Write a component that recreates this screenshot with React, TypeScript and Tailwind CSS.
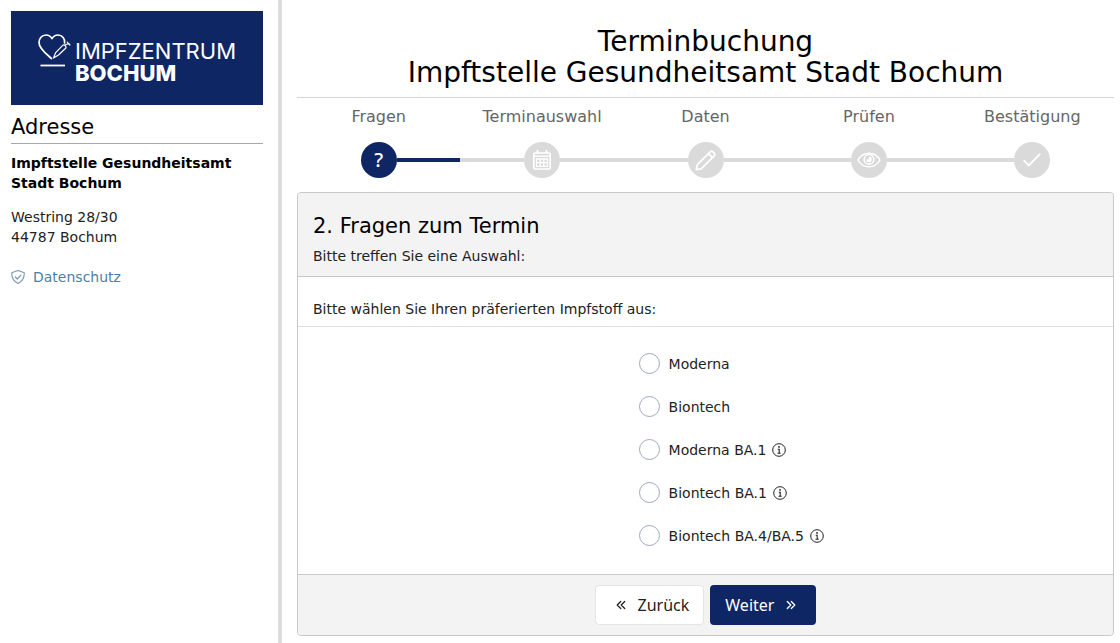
import { useState } from "react";
import type { ReactNode } from "react";
import { clsx } from "clsx";

interface Step {
  label: string;
  icon: ReactNode;
}

interface Vaccine {
  id: string;
  name: string;
  hasInfo?: boolean;
}

function CalendarIcon() {
  return (
    <svg viewBox="0 0 20 22" className="h-[22px] w-5" fill="none" stroke="currentColor" aria-hidden="true">
      <rect x="1.8" y="4" width="16.4" height="16" rx="1.5" strokeWidth="1.7" />
      <path d="M1.5 7.2h17" strokeWidth="1.4" />
      <path d="M5.5 1v3M14.5 1v3" strokeWidth="1.8" />
      <path d="M4.5 10h11v7.4h-11zM4.5 13.7h11M8.2 10v7.4M11.8 10v7.4" strokeWidth="1.3" />
    </svg>
  );
}

function PencilIcon() {
  return (
    <svg viewBox="0 0 22 22" className="size-[21px]" fill="none" stroke="currentColor" strokeWidth="1.8" strokeLinejoin="round" aria-hidden="true">
      <path d="M1.3 20.7l1.2-5.4L15.9 1.9a2 2 0 0 1 2.8 0l1.4 1.4a2 2 0 0 1 0 2.8L6.7 19.5z" />
      <path d="M14 3.8l4.2 4.2" />
    </svg>
  );
}

function EyeIcon() {
  return (
    <svg viewBox="0 0 24 16" className="h-4 w-6" fill="none" stroke="currentColor" strokeWidth="1.5" aria-hidden="true">
      <path d="M1 8C3.3 3.8 7.3 1.2 12 1.2S20.7 3.8 23 8c-2.3 4.2-6.3 6.8-11 6.8S3.3 12.2 1 8z" />
      <circle cx="12" cy="7.4" r="4.8" />
      <path d="M12 4.6A2.8 2.8 0 1 1 9.2 7.4h1.6A1.2 1.2 0 0 0 12 6.2z" fill="currentColor" stroke="none" />
    </svg>
  );
}

function CheckIcon() {
  return (
    <svg viewBox="0 0 18 14" className="h-[14px] w-[18px]" fill="none" stroke="currentColor" strokeWidth="1.8" strokeLinecap="round" aria-hidden="true">
      <path d="M1.2 7.8l4.6 4.7L16.8 1.2" />
    </svg>
  );
}

function InfoIcon() {
  return (
    <svg viewBox="0 0 14 14" className="size-[14px]" fill="none" stroke="currentColor" aria-hidden="true">
      <circle cx="7" cy="7" r="6.3" />
      <path d="M5.7 6.2h1.5v4M5.5 10.3h3.2" strokeWidth="1.1" />
      <circle cx="7" cy="3.9" r=".9" fill="currentColor" stroke="none" />
    </svg>
  );
}

function ShieldIcon() {
  return (
    <svg viewBox="0 0 14 14" className="size-[14px] text-[#7796b4]" fill="none" stroke="currentColor" strokeLinejoin="round" aria-hidden="true">
      <path d="M7 .6l6.3 2.1c.1 4.7-1.8 8.7-6.3 10.7C2.5 11.4.6 7.4.7 2.7z" strokeWidth="1.1" />
      <path d="M4.3 7l2 2L10 5.2" strokeWidth="1.2" strokeLinecap="round" />
    </svg>
  );
}

function Chevrons({ flip = false }: { flip?: boolean }) {
  return (
    <svg
      viewBox="0 0 10 10"
      className={clsx("size-[10px]", flip && "rotate-180")}
      fill="none"
      stroke="currentColor"
      strokeWidth="1.3"
      strokeLinecap="round"
      strokeLinejoin="round"
      aria-hidden="true"
    >
      <path d="M1.3 1.5L4.8 5l-3.5 3.5M5.3 1.5L8.8 5l-3.5 3.5" />
    </svg>
  );
}

function Logo() {
  return (
    <div className="flex h-[94px] items-center justify-center gap-[3px] bg-[#0e2663] pt-[7px] text-white">
      <svg viewBox="0 0 34 34" className="-mt-6 size-[34px] shrink-0" fill="none" stroke="currentColor" strokeLinecap="round" strokeLinejoin="round" aria-hidden="true">
        <path d="M13.5 25.5C9 21.500 1 16 1 9.500 1 5.500 3.800 2 8 2c2.800 0 4.700 1.500 6 3.600C15.300 3.500 17.200 2 20 2c4.300 0 7.300 3.800 6.600 8" strokeWidth="1.7" />
        <path d="M15.5 25l2.2-5.4 7-7.2c1.5-1.3 4.4 1.1 3 2.9l-7.2 6.7zM27 12l4-1.5M29.2 9.2l2.7 2.8" strokeWidth="1.2" />
        <path d="M2.5 32.5H27" strokeWidth="1.8" strokeLinecap="butt" />
      </svg>
      <div className="font-[Inter,sans-serif] text-[22px] leading-[22px]">
        <div>IMPFZENTRUM</div>
        <div className="font-extrabold">BOCHUM</div>
      </div>
    </div>
  );
}

const steps: Step[] = [
  { label: "Fragen", icon: <span className="font-['Noto_Sans',sans-serif] text-xl font-medium">?</span> },
  { label: "Terminauswahl", icon: <CalendarIcon /> },
  { label: "Daten", icon: <PencilIcon /> },
  { label: "Prüfen", icon: <EyeIcon /> },
  { label: "Bestätigung", icon: <CheckIcon /> },
];

const vaccines: Vaccine[] = [
  { id: "moderna", name: "Moderna" },
  { id: "biontech", name: "Biontech" },
  { id: "moderna-ba1", name: "Moderna BA.1", hasInfo: true },
  { id: "biontech-ba1", name: "Biontech BA.1", hasInfo: true },
  { id: "biontech-ba45", name: "Biontech BA.4/BA.5", hasInfo: true },
];

function Sidebar() {
  return (
    <aside className="w-[282px] shrink-0 border-r-4 border-[#dcdcdc] py-[11px] pr-[15px] pl-[11px]">
      <Logo />
      <h2 className="mb-[9px] border-b border-[#a8a8a8] pt-[9px] pb-[3px] text-[21px] leading-[26px] text-black">Adresse</h2>
      <p className="font-bold text-black">
        Impftstelle Gesundheitsamt
        <br />
        Stadt Bochum
      </p>
      <address className="mt-[14px] not-italic">
        Westring 28/30
        <br />
        44787 Bochum
      </address>
      <a href="#datenschutz" className="mt-5 flex items-center gap-2 text-[#4d7fa6]">
        <ShieldIcon />
        Datenschutz
      </a>
    </aside>
  );
}

function Stepper({ current }: { current: number }) {
  return (
    <ol className="flex pt-[9px]">
      {steps.map((step, i) => {
        const active = i <= current;
        return (
          <li key={step.label} className="flex-1 text-center text-base leading-5 text-[#666]" aria-current={i === current ? "step" : undefined}>
            {step.label}
            <div className="mt-[15px] flex items-center text-white">
              <span className={clsx("h-1 flex-1", i > 0 && (active ? "bg-[#0e2663]" : "bg-[#dadada]"))} />
              <span className={clsx("flex size-9 items-center justify-center rounded-full", active ? "bg-[#0e2663]" : "bg-[#dadada]")}>
                {step.icon}
              </span>
              <span className={clsx("h-1 flex-1", i < steps.length - 1 && (active ? "bg-[#0e2663]" : "bg-[#dadada]"))} />
            </div>
          </li>
        );
      })}
    </ol>
  );
}

export default function App() {
  const [selected, setSelected] = useState("");

  return (
    <div className="flex min-h-screen bg-white font-['DejaVu_Sans',sans-serif] text-sm leading-5 text-[#222]">
      <Sidebar />

      <main className="min-w-0 flex-1 pt-[26px] pr-[6px] pb-[7px] pl-[15px]">
        <h1 className="border-b border-[#d5d5d5] pb-[9px] text-center text-[28px] leading-[31px] text-black">
          Terminbuchung
          <br />
          Impftstelle Gesundheitsamt Stadt Bochum
        </h1>

        <Stepper current={0} />

        <form className="mt-[14px] rounded border border-[#c8c8c8]" onSubmit={(e) => e.preventDefault()}>
          <header className="rounded-t border-b border-[#c8c8c8] bg-[#f3f3f3] px-[15px] pt-5 pb-[10px]">
            <h2 className="text-[21px] leading-[26px] text-black">2. Fragen zum Termin</h2>
            <p className="mt-[7px]">Bitte treffen Sie eine Auswahl:</p>
          </header>

          <fieldset>
            <legend className="w-full border-b border-[#e0e0e0] px-[15px] pt-[22px] pb-[7px]">
              Bitte wählen Sie Ihren präferierten Impfstoff aus:
            </legend>
            <div className="grid grid-cols-12 pt-[26px] pb-7">
              <div className="col-span-7 col-start-6 flex flex-col gap-[22px] pl-px">
                {vaccines.map((vaccine) => (
                  <div key={vaccine.id} className="flex items-center">
                    <input
                      type="radio"
                      id={vaccine.id}
                      name="vaccine"
                      value={vaccine.id}
                      checked={selected === vaccine.id}
                      onChange={() => setSelected(vaccine.id)}
                      className="size-[21px] appearance-none rounded-full border border-[#a0a8be] bg-white checked:border-[6px] checked:border-[#0e2663]"
                    />
                    <label htmlFor={vaccine.id} className="flex items-center gap-[6px] pl-[9px]">
                      {vaccine.name}
                      {vaccine.hasInfo && <InfoIcon />}
                    </label>
                  </div>
                ))}
              </div>
            </div>
          </fieldset>

          <footer className="flex justify-center gap-[6px] rounded-b border-t border-[#c8c8c8] bg-[#f3f3f3] py-[10px] font-['Noto_Sans',sans-serif] text-base">
            <button type="button" className="flex h-10 items-center gap-3 rounded border border-[#e4e4e4] bg-white pr-[14px] pl-5">
              <Chevrons flip />
              Zurück
            </button>
            <button type="submit" className="flex h-10 items-center gap-3 rounded bg-[#0e2663] pr-5 pl-[15px] text-white">
              Weiter
              <Chevrons />
            </button>
          </footer>
        </form>
      </main>
    </div>
  );
}
